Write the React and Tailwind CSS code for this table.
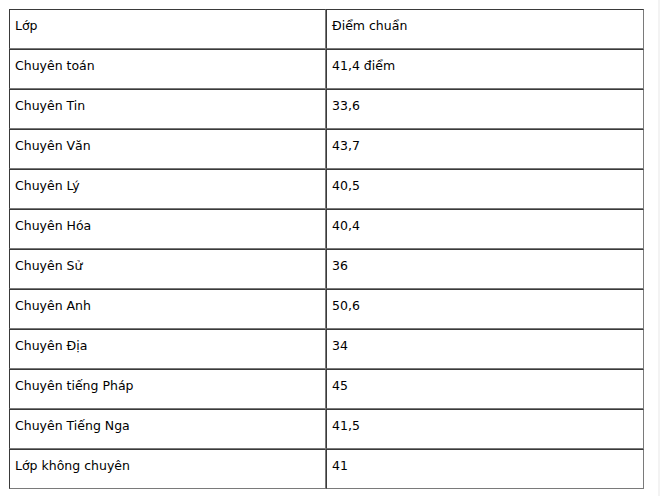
const rows = [
  ["Lớp", "Điểm chuẩn"],
  ["Chuyên toán", "41,4 điểm"],
  ["Chuyên Tin", "33,6"],
  ["Chuyên Văn", "43,7"],
  ["Chuyên Lý", "40,5"],
  ["Chuyên Hóa", "40,4"],
  ["Chuyên Sử", "36"],
  ["Chuyên Anh", "50,6"],
  ["Chuyên Địa", "34"],
  ["Chuyên tiếng Pháp", "45"],
  ["Chuyên Tiếng Nga", "41,5"],
  ["Lớp không chuyên", "41"],
];

const cell =
  "h-[40px] align-top border border-t-[#3a3a3a] border-l-[#3a3a3a] border-r-[#7a7a7a] border-b-[#7a7a7a] px-[5px] pt-[8px] text-left font-normal";

export default function App() {
  return (
    <div className="flex w-[660px] h-[496px] bg-white">
      <div className="flex-1 pt-[9px] pl-[9px]">
        <table
          className="w-[635px] table-fixed border-separate border-spacing-0 text-[12.5px] leading-[15px] text-black"
          style={{ fontFamily: "Tahoma, 'DejaVu Sans', Verdana, sans-serif" }}
        >
          <colgroup>
            <col className="w-[317px]" />
            <col />
          </colgroup>
          <tbody>
            {rows.map(([a, b]) => (
              <tr key={a}>
                <td className={cell}>{a}</td>
                <td className={cell}>{b}</td>
              </tr>
            ))}
          </tbody>
        </table>
      </div>
      <div className="w-[2px] bg-[#f3f3f3]" />
    </div>
  );
}
